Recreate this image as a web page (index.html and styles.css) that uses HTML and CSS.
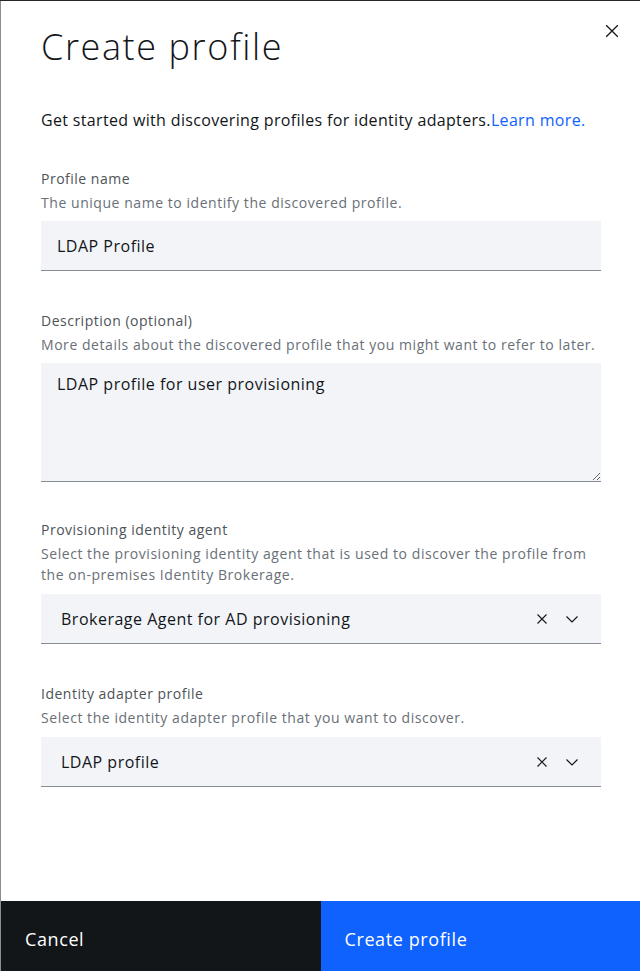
FILE: index.html
```html
<!DOCTYPE html>
<html lang="en">
<head>
<meta charset="utf-8">
<title>Create profile</title>
<link rel="stylesheet" href="styles.css">
</head>
<body>
<div class="modal">
  <div class="modal-body">
    <header class="modal-header">
      <h1 class="modal-title">Create profile</h1>
      <button class="close-btn" aria-label="Close">
        <svg width="16" height="16" viewBox="0 0 16 16"><path d="M2.2 2.2 L13.8 13.8 M13.8 2.2 L2.2 13.8" stroke="#121619" stroke-width="1.3" fill="none"/></svg>
      </button>
    </header>
    <p class="intro">Get started with discovering profiles for identity adapters.<a class="link" href="#">Learn more.</a></p>

    <div class="form-item item-name">
      <label class="label">Profile name</label>
      <div class="helper">The unique name to identify the discovered profile.</div>
      <input class="text-input" type="text" value="LDAP Profile">
    </div>

    <div class="form-item item-desc">
      <label class="label">Description (optional)</label>
      <div class="helper">More details about the discovered profile that you might want to refer to later.</div>
      <textarea class="text-area">LDAP profile for user provisioning</textarea>
    </div>

    <div class="form-item item-agent">
      <label class="label">Provisioning identity agent</label>
      <div class="helper">Select the provisioning identity agent that is used to discover the profile from the on-premises Identity Brokerage.</div>
      <div class="combo">
        <span class="combo-value">Brokerage Agent for AD provisioning</span>
        <span class="combo-icons">
          <svg width="16" height="16" viewBox="0 0 16 16"><path d="M3.5 3.5 L12.5 12.5 M12.5 3.5 L3.5 12.5" stroke="#121619" stroke-width="1.1" fill="none"/></svg>
          <svg width="16" height="16" viewBox="0 0 16 16"><path d="M2.5 5.5 L8 11 L13.5 5.5" stroke="#121619" stroke-width="1.2" fill="none"/></svg>
        </span>
      </div>
    </div>

    <div class="form-item item-adapter">
      <label class="label">Identity adapter profile</label>
      <div class="helper">Select the identity adapter profile that you want to discover.</div>
      <div class="combo">
        <span class="combo-value">LDAP profile</span>
        <span class="combo-icons">
          <svg width="16" height="16" viewBox="0 0 16 16"><path d="M3.5 3.5 L12.5 12.5 M12.5 3.5 L3.5 12.5" stroke="#121619" stroke-width="1.1" fill="none"/></svg>
          <svg width="16" height="16" viewBox="0 0 16 16"><path d="M2.5 5.5 L8 11 L13.5 5.5" stroke="#121619" stroke-width="1.2" fill="none"/></svg>
        </span>
      </div>
    </div>
  </div>

  <footer class="modal-footer">
    <button class="btn btn-secondary">Cancel</button>
    <button class="btn btn-primary">Create profile</button>
  </footer>
</div>
</body>
</html>
```

FILE: styles.css
```css
* { box-sizing: border-box; }
html, body { margin: 0; padding: 0; }
body {
  background: #8d8d8d;
  font-family: "Open Sans", "Liberation Sans", Arial, sans-serif;
  color: #121619;
  border-top: 1px solid #262626;
  padding-left: 1px;
}
.modal {
  background: #ffffff;
  height: 970px;
  display: flex;
  flex-direction: column;
}
.modal-body {
  padding: 0 39px 0 40px;
  flex: 1;
}
.modal-header {
  display: flex;
  justify-content: space-between;
  align-items: flex-start;
  position: relative;
}
.modal-title {
  margin: 22px 0 0 0;
  font-size: 36px;
  line-height: 48px;
  font-weight: 300;
  letter-spacing: 1.6px;
}
.close-btn {
  position: absolute;
  right: -21px;
  top: 20px;
  width: 20px;
  height: 20px;
  padding: 2px;
  border: 0;
  background: transparent;
}
.close-btn svg { display: block; }
.intro {
  margin: 38px 0 0 0;
  font-size: 16px;
  line-height: 22px;
  letter-spacing: 0.34px;
}
.link { color: #0f62fe; text-decoration: none; }
.form-item {
  display: flex;
  flex-direction: column;
  margin-top: 40px;
}
.item-name { margin-top: 39px; }
.item-desc { margin-top: 41px; }
.item-agent { margin-top: 39px; }
.item-adapter { margin-top: 41px; }
.label {
  font-size: 14px;
  line-height: 18px;
  color: #4d5358;
  letter-spacing: 0.5px;
}
.helper {
  font-size: 14px;
  line-height: 21px;
  color: #697077;
  letter-spacing: 0.55px;
  margin-top: 4px;
  margin-bottom: 8px;
}
.item-agent .helper { margin-bottom: 9px; }
.item-adapter .helper { margin-bottom: 9px; }
.text-input, .text-area, .combo {
  width: 100%;
  background: #f2f4f8;
  border: 0;
  border-bottom: 1px solid #878d96;
  font-family: inherit;
  font-size: 16px;
  color: #121619;
  letter-spacing: 0.5px;
  outline: none;
}
.text-input {
  height: 50px;
  padding: 0 16px;
}
.text-area {
  height: 119px;
  padding: 10px 16px;
  line-height: 22px;
  resize: vertical;
  display: block;
}
.combo {
  height: 50px;
  display: flex;
  align-items: center;
  justify-content: space-between;
  padding: 0 21px 0 20px;
}
.combo-icons {
  display: flex;
  gap: 14px;
  align-items: center;
}
.combo-icons svg { display: block; }
.modal-footer {
  display: flex;
  height: 70px;
}
.btn {
  flex: 1;
  border: 0;
  font-family: inherit;
  font-size: 18px;
  text-align: left;
  padding: 6px 24px 0 24px;
  color: #ffffff;
  letter-spacing: 0.6px;
}
.btn-secondary { background: #121619; }
.btn-primary { background: #0f62fe; }
```
